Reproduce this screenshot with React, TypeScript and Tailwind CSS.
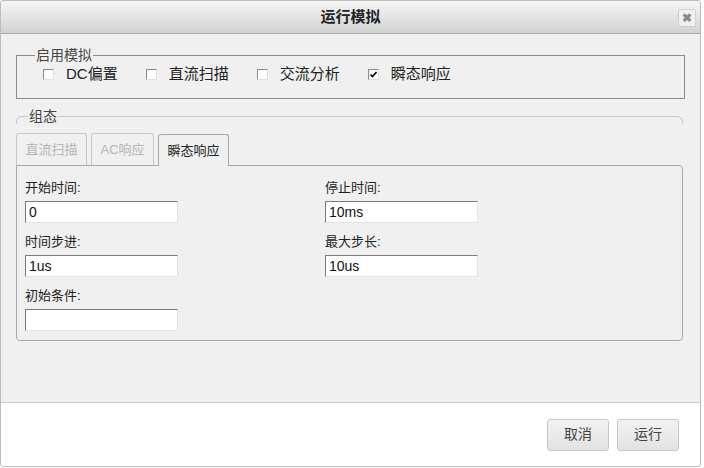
const font = { fontFamily: '"Liberation Sans", "Noto Sans CJK SC", sans-serif' };

function Check({ checked, label, first }: { checked?: boolean; label: string; first?: boolean }) {
  return (
    <div className={`flex items-center gap-[12px] ${first ? "" : "ml-[28px]"}`}>
      <span className="w-[11px] h-[11px] border border-[#8a8a8a] border-r-[#e0e0e0] border-b-[#e0e0e0] bg-white flex items-center justify-center">
        {checked && (
          <svg width="9" height="9" viewBox="0 0 9 9">
            <path d="M1.5 4.5 L3.5 6.5 L7.5 2" stroke="#000" strokeWidth="1.6" fill="none" />
          </svg>
        )}
      </span>
      <span className="text-[15px] text-[#222]">{label}</span>
    </div>
  );
}

function Field({ label, value }: { label: string; value: string }) {
  return (
    <div className="flex flex-col">
      <span className="text-[13px] text-[#222] leading-[18px] mb-[4px]">{label}</span>
      <div className="w-[153px] h-[22px] bg-white border border-[#7a7a7a] border-r-[#e3e3e3] border-b-[#e3e3e3] pl-[3px] text-[14px] leading-[20px] text-[#111]">
        {value}
      </div>
    </div>
  );
}

export default function App() {
  return (
    <div className="w-[704px] h-[468px] bg-white" style={font}>
      <div className="w-[701px] h-[467px] border border-[#bdbdbd] rounded-[3px] bg-[#f0f0f0] flex flex-col overflow-hidden">
        <div className="h-[33px] shrink-0 bg-gradient-to-b from-[#f6f6f6] to-[#d2d2d2] border-b border-[#a9a9a9] flex items-center justify-center relative">
          <span className="text-[15px] font-bold text-[#222]">运行模拟</span>
          <span className="absolute right-[4px] top-[8px] w-[18px] h-[18px] bg-[#f0f0f0] border border-[#d0d0d0] rounded-[2px] flex items-center justify-center text-[#888] text-[12px] font-bold">✖</span>
        </div>
        <div className="flex-1 px-[15px] pt-[13px]">
          <fieldset className="border border-[#8c8c8c] h-[52px] px-[26px]">
            <legend className="text-[14px] text-[#444] px-[1px] ml-[-8px] leading-[16px]">启用模拟</legend>
            <div className="flex items-center">
              <Check label="DC偏置" first />
              <Check label="直流扫描" />
              <Check label="交流分析" />
              <Check label="瞬态响应" checked />
            </div>
          </fieldset>
          <fieldset className="mt-[9px] border border-[#c8c8c8] border-b-0 rounded-t-[6px] mr-[2px] h-[12px] pl-[11px]">
            <legend className="text-[14px] text-[#444] px-[1px] leading-[16px]">组态</legend>
          </fieldset>
          <div className="mt-[9px] flex items-end gap-[4px] h-[32px] text-[13px]">
            <div className="h-[32px] w-[71px] border border-[#c8c8c8] border-b-0 rounded-t-[3px] flex items-center justify-center text-[#b5b5b5]">直流扫描</div>
            <div className="h-[32px] w-[63px] border border-[#c8c8c8] border-b-0 rounded-t-[3px] flex items-center justify-center text-[#b5b5b5]">AC响应</div>
            <div className="h-[32px] w-[71px] border border-[#a8a8a8] border-b-0 rounded-t-[3px] flex items-center justify-center text-[#222] relative top-[1px] bg-[#f0f0f0]">瞬态响应</div>
          </div>
          <div className="border border-[#a8a8a8] rounded-b-[4px] rounded-tr-[4px] mr-[2px] h-[176px] px-[8px] pt-[13px] flex">
            <div className="w-[300px] flex flex-col gap-[10px]">
              <Field label="开始时间:" value="0" />
              <Field label="时间步进:" value="1us" />
              <Field label="初始条件:" value="" />
            </div>
            <div className="flex flex-col gap-[10px]">
              <Field label="停止时间:" value="10ms" />
              <Field label="最大步长:" value="10us" />
            </div>
          </div>
        </div>
        <div className="h-[64px] shrink-0 bg-white border-t border-[#c8c8c8] flex items-center justify-end gap-[8px] pr-[21px]">
          <button className="w-[62px] h-[32px] border border-[#c8c8c8] rounded-[3px] bg-gradient-to-b from-[#f2f2f2] to-[#e2e2e2] text-[14px] text-[#444]">取消</button>
          <button className="w-[62px] h-[32px] border border-[#c8c8c8] rounded-[3px] bg-gradient-to-b from-[#f2f2f2] to-[#e2e2e2] text-[14px] text-[#444]">运行</button>
        </div>
      </div>
    </div>
  );
}
